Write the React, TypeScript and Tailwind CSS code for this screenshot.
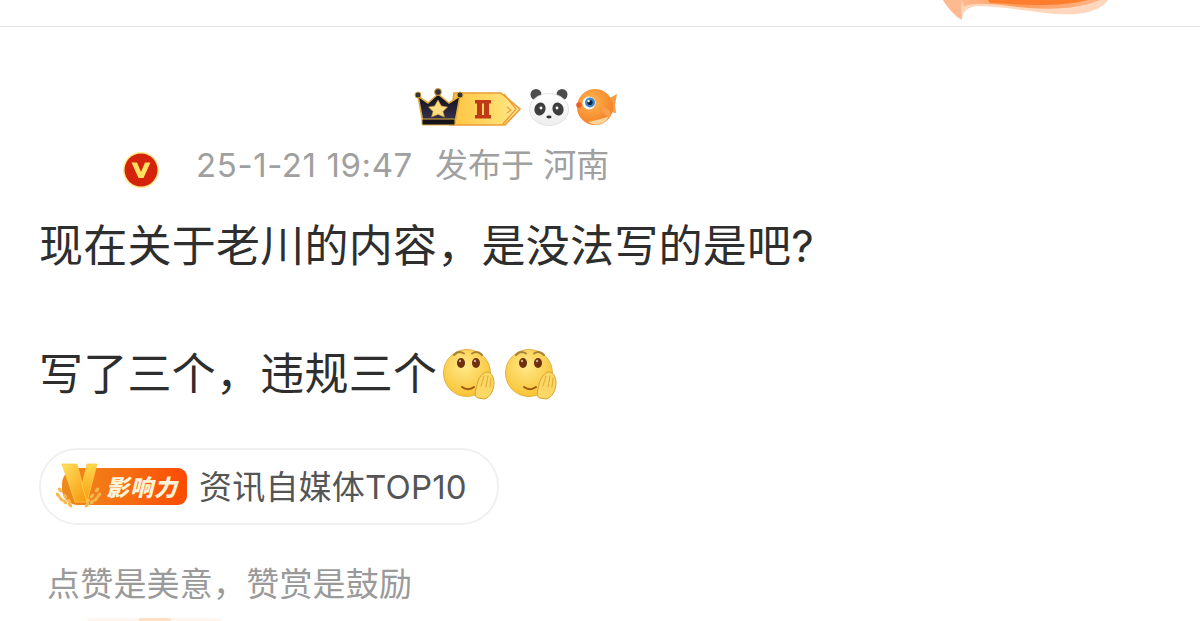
import React from "react";

const font = { fontFamily: '"Inter","Noto Sans CJK SC","Liberation Sans",sans-serif' };

function TopOrnament() {
  return (
    <svg className="absolute left-[940px] top-0" width="175" height="22" viewBox="0 0 175 22">
      <defs>
        <linearGradient id="orn" x1="0" x2="1" y1="0" y2="0">
          <stop offset="0" stopColor="#ffb98e" />
          <stop offset="0.4" stopColor="#ff9c5e" />
          <stop offset="1" stopColor="#ffb385" />
        </linearGradient>
      </defs>
      <path d="M3 0 C8 8 14 15 22 20 C22 12 27 7 38 6 C62 7 82 10 105 13 C130 16 158 15 168 0 Z" fill="#ffd7bd" />
      <path d="M3 0 C8 8 14 15 22 20 C21 13 21 8 22 0 Z" fill="#ffb98e" />
      <path d="M22 0 L24 7 C30 3 45 3 70 6 C95 9 130 12 160 0 Z" fill="url(#orn)" />
      <path d="M48 0 L50 3 C70 3 110 9 148 0 Z" fill="#ff7e2e" />
    </svg>
  );
}

function Crown() {
  return (
    <svg width="108" height="40" viewBox="0 0 108 40">
      <defs>
        <linearGradient id="tag" x1="0" x2="1" y1="0" y2="0">
          <stop offset="0" stopColor="#ffc441" />
          <stop offset="0.75" stopColor="#ffdf72" />
          <stop offset="1" stopColor="#ffeda6" />
        </linearGradient>
        <linearGradient id="crown" x1="0" x2="0" y1="0" y2="1">
          <stop offset="0" stopColor="#0e0e18" />
          <stop offset="1" stopColor="#3c3654" />
        </linearGradient>
      </defs>
      <path d="M40 5 H87 L106 21 L91 37 H36 Z" fill="url(#tag)" stroke="#eb9c34" strokeWidth="1.6" />
      <path d="M90 6 L102 21 L89 36" fill="none" stroke="#ee9c34" strokeWidth="1.4" />
      <path d="M93 19 L97 22 L93 25" fill="none" stroke="#ee9c34" strokeWidth="1.2" />
      <path d="M4 8 L14 15 L24 6 L35 15 L46 8 L41 35 H9 Z" fill="url(#crown)" stroke="#e0ac3c" strokeWidth="1.6" />
      <rect x="8" y="31" width="33" height="6" rx="1" fill="#14141a" stroke="#e0ac3c" strokeWidth="1" />
      <circle cx="4" cy="7" r="3" fill="#33333f" stroke="#d8a232" strokeWidth="1" />
      <circle cx="24" cy="4" r="3.4" fill="#33333f" stroke="#d8a232" strokeWidth="1" />
      <circle cx="46" cy="7" r="3" fill="#33333f" stroke="#d8a232" strokeWidth="1" />
      <path d="M24 12 L27.4 18 L33.5 19 L29 23.5 L30.5 29 L24 26.4 L17.5 29 L19 23.5 L14.5 19 L20.6 18 Z" fill="#fbdd83" stroke="#c8902a" strokeWidth="0.6" />
      <path fillRule="evenodd" d="M61 12 H77 V15.5 H75 V27 H77 V30.5 H61 V27 H63 V15.5 H61 Z M68 15.5 V27 H70 V15.5 Z" fill="#bf3a16" />
    </svg>
  );
}

function Panda() {
  return (
    <svg width="42" height="40" viewBox="0 0 42 40">
      <defs>
        <linearGradient id="pandaFace" x1="0" x2="0" y1="0" y2="1">
          <stop offset="0" stopColor="#ffffff" />
          <stop offset="1" stopColor="#eeeeee" />
        </linearGradient>
      </defs>
      <circle cx="8" cy="6.5" r="5.5" fill="#4d4d4d" />
      <circle cx="34" cy="6.5" r="5.5" fill="#4d4d4d" />
      <ellipse cx="21" cy="21.5" rx="19.5" ry="16" fill="url(#pandaFace)" stroke="#dcdcdc" strokeWidth="0.8" />
      <ellipse cx="12" cy="21" rx="5.5" ry="6.5" fill="#3e3e3e" transform="rotate(18 12 21)" />
      <ellipse cx="30" cy="21" rx="5.5" ry="6.5" fill="#3e3e3e" transform="rotate(-18 30 21)" />
      <circle cx="13" cy="20" r="1.4" fill="#fff" />
      <circle cx="29" cy="20" r="1.4" fill="#fff" />
      <ellipse cx="21" cy="29" rx="2.6" ry="1.4" fill="#333" />
    </svg>
  );
}

function Fish() {
  return (
    <svg width="42" height="40" viewBox="0 0 42 40">
      <defs>
        <radialGradient id="fish" cx="0.4" cy="0.35" r="0.75">
          <stop offset="0" stopColor="#ffb452" />
          <stop offset="1" stopColor="#f27a1f" />
        </radialGradient>
      </defs>
      <path d="M33 11 L42 6 L40 17 L41 25 L34 24 Z" fill="#f59a45" />
      <circle cx="20" cy="19" r="18" fill="url(#fish)" />
      <path d="M13 34 C20 39 31 36 34 28 C28 31 20 32 13 34 Z" fill="#ffd49a" />
      <path d="M27 20 C33 19 37 24 35 29 C31 28 27 25 27 20 Z" fill="#f8a24f" />
      <circle cx="14" cy="15" r="6.5" fill="#fff" />
      <circle cx="15" cy="14.5" r="5" fill="#3a86c8" />
      <circle cx="15" cy="14.5" r="2.6" fill="#10243f" />
      <circle cx="13.6" cy="13" r="1.2" fill="#fff" />
      <circle cx="4" cy="17" r="2.8" fill="#e85f2b" />
    </svg>
  );
}

function VBadge() {
  return (
    <svg width="38" height="38" viewBox="0 0 38 38">
      <circle cx="19" cy="19" r="18" fill="#ffeb8a" />
      <circle cx="19" cy="19" r="16.5" fill="#d6230c" />
      <path d="M9.5 11.5 H15 L19 21 L23 11.5 H28.5 L21.5 27 H16.5 Z" fill="#ffe060" />
    </svg>
  );
}

function Emoji() {
  return (
    <svg width="52" height="52" viewBox="0 0 52 52" className="shrink-0">
      <defs>
        <radialGradient id="face" cx="0.45" cy="0.35" r="0.7">
          <stop offset="0" stopColor="#ffe98a" />
          <stop offset="1" stopColor="#f9c02e" />
        </radialGradient>
      </defs>
      <circle cx="24" cy="25" r="23.5" fill="url(#face)" stroke="#dca52a" strokeWidth="0.8" />
      <path d="M11 7 C14 3.5 18 3.5 21 5.5" fill="none" stroke="#a88238" strokeWidth="2" strokeLinecap="round" />
      <path d="M29 5.5 C32 3.5 36 3.5 39 7" fill="none" stroke="#a88238" strokeWidth="2" strokeLinecap="round" />
      <ellipse cx="18" cy="15" rx="4" ry="5" fill="#6e2f0c" />
      <ellipse cx="33" cy="15" rx="4" ry="5" fill="#6e2f0c" />
      <circle cx="17" cy="13" r="1.2" fill="#fff" opacity="0.6" />
      <circle cx="32" cy="13" r="1.2" fill="#fff" opacity="0.6" />
      <path d="M19 39 C23 42 27 42 31 39" fill="none" stroke="#9a5a10" strokeWidth="2" strokeLinecap="round" />
      <path d="M35 50 C30 49 33 41 34 37 C35 30 40 24 44 24 C49 24 51 30 51 35 C51 42 47 50 41 51 Z" fill="#fbd765" stroke="#d9a32c" strokeWidth="1" />
      <path d="M41 28 L38 38 M45 28 L43 39 M48 30 L47 39" fill="none" stroke="#dca52a" strokeWidth="0.9" strokeLinecap="round" />
    </svg>
  );
}

function VLogo() {
  const wheatL = [[4, 27], [2, 32], [5, 36], [9, 33], [9, 39], [13, 38], [14, 42]];
  const wheatR = [[41, 27], [43, 32], [40, 36], [36, 33], [36, 39], [32, 38], [31, 42]];
  return (
    <div className="relative flex h-[37px] w-[132px] items-center">
      <div className="ml-[6px] flex h-[37px] w-[125px] items-center justify-end rounded-r-[9px] rounded-l-[16px] bg-gradient-to-r from-[#ee8a1c] to-[#fb4a04] pr-[9px]">
        <span className="text-[23px] leading-none font-black italic tracking-[1px] text-[#fff3d8]" style={{ fontFamily: '"Noto Sans CJK SC",sans-serif' }}>影响力</span>
      </div>
      <svg className="absolute -top-[5px] left-0" width="50" height="47" viewBox="0 0 50 47">
        <defs>
          <linearGradient id="vg" x1="0" x2="1" y1="0" y2="1">
            <stop offset="0" stopColor="#ffe25e" />
            <stop offset="1" stopColor="#f7940c" />
          </linearGradient>
          <linearGradient id="vg2" x1="0" x2="0" y1="0" y2="1">
            <stop offset="0" stopColor="#ffd84a" />
            <stop offset="1" stopColor="#f99c10" />
          </linearGradient>
        </defs>
        {wheatL.map(([x, y]) => <ellipse key={`l${x}-${y}`} cx={x} cy={y} rx="2.8" ry="1.6" fill="#f9b84e" transform={`rotate(45 ${x} ${y})`} />)}
        {wheatR.map(([x, y]) => <ellipse key={`r${x}-${y}`} cx={x} cy={y} rx="2.8" ry="1.6" fill="#f9b84e" transform={`rotate(-45 ${x} ${y})`} />)}
        <path d="M6 1 H21 L31 39 H19 Z" fill="url(#vg)" stroke="#ffcc48" strokeWidth="0.8" />
        <path d="M31 1 H41 L31 39 L26 22 Z" fill="url(#vg2)" stroke="#ffcc48" strokeWidth="0.8" />
      </svg>
    </div>
  );
}

export default function App() {
  return (
    <div className="relative h-[621px] w-[1200px] overflow-hidden bg-white" style={font}>
      <div className="h-[27px] border-b border-[#e6e6e6]" />
      <TopOrnament />
      <div className="mt-[61px] flex h-[40px] items-center pl-[414px]">
        <Crown />
        <div className="ml-[6px]"><Panda /></div>
        <div className="ml-[5px]"><Fish /></div>
      </div>
      <div className="mt-[17px] flex h-[40px] items-center pl-[122px]">
        <div className="mt-[10px]"><VBadge /></div>
        <span className="ml-[36px] text-[33px] leading-[40px] tracking-[0.6px] text-[#a0a0a0]">25-1-21 19:47</span>
        <span className="ml-[22px] text-[33px] leading-[40px] text-[#a0a0a0]">发布于 河南</span>
      </div>
      <div className="mt-[29px] pl-[39px] text-[44px] leading-[64px] tracking-[0.25px] text-[#2e2e2e]">
        <div>现在关于老川的内容，是没法写的是吧?</div>
        <div className="h-[64px]" />
        <div className="flex items-center">
          <span>写了三个，违规三个</span>
          <span className="ml-[6px] -mt-[1px]"><Emoji /></span>
          <span className="ml-[10px] -mt-[1px]"><Emoji /></span>
        </div>
      </div>
      <div className="ml-[39px] mt-[42px] flex h-[77px] w-[460px] items-center rounded-[38px] border-2 border-[#f0f0f0] pl-[15px]">
        <VLogo />
        <span className="ml-[11px] whitespace-nowrap text-[33px] leading-[40px] tracking-[0.2px] text-[#555]">资讯自媒体TOP10</span>
      </div>
      <div className="mt-[39px] pl-[47px] text-[33px] leading-[40px] tracking-[0.2px] text-[#9a9a9a]">点赞是美意，赞赏是鼓励</div>
      <div className="absolute bottom-0 left-[88px] h-[3px] w-[134px] bg-[#fff6ef]">
        <div className="mx-auto h-[3px] w-[32px] bg-[#fde0c6]" />
      </div>
    </div>
  );
}
